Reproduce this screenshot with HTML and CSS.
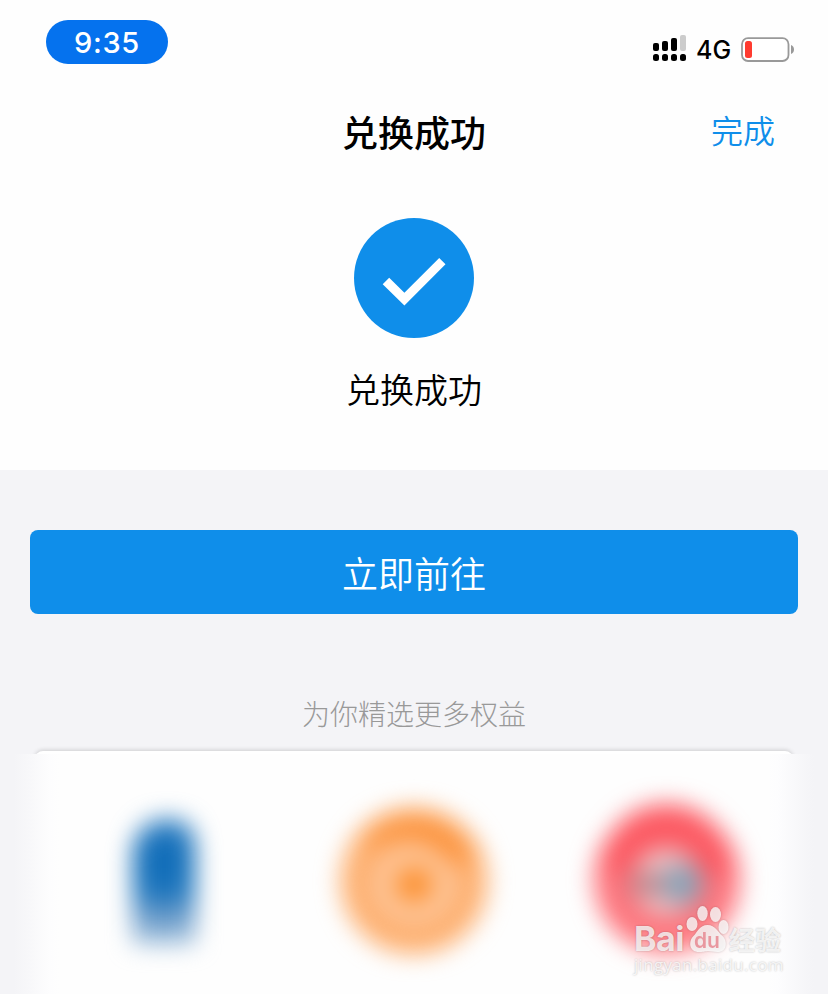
FILE: index.html
```html
<!DOCTYPE html>
<html lang="zh-CN">
<head>
    <meta charset="UTF-8">
    <meta name="viewport" content="width=device-width, initial-scale=1.0">
    <title>兑换成功</title>
    <link rel="stylesheet" href="styles.css">
</head>
<body>
    <div class="top">
        <div class="status-bar">
            <div class="time">9:35</div>
            <div class="status-right">
                <svg class="signal" width="34" height="28" viewBox="0 0 34 28">
                    <rect x="0" y="9" width="6" height="8" rx="2"/>
                    <rect x="9" y="7" width="6" height="10" rx="2"/>
                    <rect x="18" y="4" width="6" height="13" rx="2"/>
                    <rect class="signal-off" x="27" y="1" width="6" height="16" rx="2"/>
                    <rect x="0" y="20" width="6" height="7" rx="2.5"/>
                    <rect x="9" y="20" width="6" height="7" rx="2.5"/>
                    <rect x="18" y="20" width="6" height="7" rx="2.5"/>
                    <rect x="27" y="20" width="6" height="7" rx="2.5"/>
                </svg>
                <span class="network">4G</span>
                <svg class="battery" width="54" height="26" viewBox="0 0 54 26">
                    <rect x="1" y="1.2" width="46.5" height="22.800" rx="6" fill="#fff" stroke="#999" stroke-width="1.8"/>
                    <rect x="4" y="4" width="7" height="17" rx="2.5" fill="#ff3b30"/>
                    <path d="M50 8c4 1.500 4 7.500 0 9z" fill="#999"/>
                </svg>
            </div>
        </div>

        <div class="nav">
            <h1 class="nav-title">兑换成功</h1>
            <a class="nav-done">完成</a>
        </div>

        <div class="result">
            <svg class="result-icon" width="120" height="120" viewBox="0 0 120 120">
                <circle cx="60" cy="60" r="60" fill="#0f8eea"/>
                <polygon points="28.700,66.200 35.200,59.800 50.400,74.800 85.200,40 91.500,46.200 50.400,87.500" fill="#fff"/>
            </svg>
            <p class="result-text">兑换成功</p>
        </div>
    </div>

    <div class="main">
        <button class="btn-go">立即前往</button>
        <p class="more-title">为你精选更多权益</p>

        <div class="card">
            <div class="card-body">
                <svg class="brand" viewBox="0 0 252 242">
                    <defs>
                        <linearGradient id="blue" x1="0" y1="0" x2="0" y2="1">
                            <stop offset="0" stop-color="#2f7fc3"/>
                            <stop offset="0.3" stop-color="#0f6cb8"/>
                            <stop offset="0.58" stop-color="#1c75bd"/>
                            <stop offset="0.78" stop-color="#6d9cc9"/>
                            <stop offset="1" stop-color="#a5c3de"/>
                        </linearGradient>
                    </defs>
                    <path d="M97 190V95q4-22 24-29q38-6 38 27v97z" fill="url(#blue)"/>
                </svg>
                <svg class="brand" viewBox="0 0 252 242">
                    <circle cx="126" cy="127" r="73" fill="#fdae6d"/>
                    <path d="M66 91A69 69 0 0 1 190 104L158 112A48 48 0 0 0 96 88z" fill="#fc9540"/>
                    <ellipse cx="126" cy="131" rx="33" ry="30" fill="none" stroke="#fecba3" stroke-width="17"/>
                    <circle cx="101" cy="113" r="12" fill="#fec79c"/>
                    <circle cx="126" cy="130" r="17" fill="#fc9030"/>
                </svg>
                <svg class="brand" viewBox="0 0 252 242">
                    <circle cx="127" cy="126" r="73" fill="#fd747c"/>
                    <path d="M60 115A66 66 0 0 1 193 118L163 124A36 36 0 0 0 92 120z" fill="#fc5861"/>
                    <circle cx="126" cy="128" r="34" fill="#efc3c6"/>
                    <rect x="90" y="120" width="36" height="20" fill="#b58087"/>
                    <circle cx="143" cy="130" r="20" fill="#86a4b9"/>
                </svg>
            </div>
        </div>
    </div>

    <div class="watermark">
        <div class="watermark-logo">
            <span class="wm-bai">Bai</span>
            <svg class="wm-paw" width="44" height="50" viewBox="0 0 44 50">
                <ellipse cx="7" cy="20" rx="5.500" ry="7"/>
                <ellipse cx="17.500" cy="9.500" rx="5.200" ry="7.500"/>
                <ellipse cx="30.500" cy="10.500" rx="5.500" ry="7.500"/>
                <ellipse cx="38.500" cy="23" rx="5" ry="7"/>
                <path d="M22.500 21c-8 0-10 7-14 11c-5 5-5 16 6 16c5 0 5-1 9-1s5 1 9 1c10 0 10-11 5-16c-5-4-7-11-15-11z"/>
                <text x="22" y="44" text-anchor="middle">du</text>
            </svg>
            <span class="wm-cn">经验</span>
        </div>
        <div class="watermark-url">jingyan.baidu.com</div>
    </div>
</body>
</html>
```
FILE: styles.css
```css
* {
    box-sizing: border-box;
}

body {
    margin: 0;
    height: 994px;
    overflow: hidden;
    position: relative;
    background-color: #f4f4f7;
    color: #000;
    font-family: "Noto Sans CJK SC", sans-serif;
}

h1,
p {
    margin: 0;
}

.top {
    height: 470px;
    background-color: #fefefe;
}

/* status bar */
.status-bar {
    height: 84px;
    padding: 20px 35px 0 46px;
    display: flex;
    justify-content: space-between;
    align-items: flex-start;
}

.time {
    width: 122px;
    height: 44px;
    border-radius: 22px;
    background-color: #0572ee;
    color: #fff;
    font-family: Inter, sans-serif;
    font-size: 29px;
    font-weight: 550;
    line-height: 45px;
    letter-spacing: 0.7px;
    text-align: center;
}

.status-right {
    display: flex;
    align-items: center;
    height: 28px;
    margin-top: 14px;
}

.signal-off {
    fill: #ccc;
}

.network {
    width: 36px;
    margin: 4px 9px 0 9px;
    font-family: Inter, sans-serif;
    font-size: 25px;
    font-weight: 450;
    line-height: 28px;
}

.battery {
    margin: 3px -2px 0 0;
}

/* nav */
.nav {
    height: 96px;
    padding: 0 53px;
    display: grid;
    grid-template-columns: 1fr auto 1fr;
    align-items: start;
}

.nav-title {
    grid-column: 2;
    font-size: 36px;
    font-weight: 500;
    line-height: 94px;
}

.nav-done {
    justify-self: end;
    color: #0f8eea;
    font-size: 32px;
    font-weight: 350;
    line-height: 91px;
}

.result {
    padding-top: 38px;
    display: flex;
    flex-direction: column;
    align-items: center;
}

.result-text {
    margin-top: 26px;
    font-size: 34px;
    font-weight: 350;
    line-height: 50px;
}

/* content */
.main {
    padding: 60px 30px 0;
}

.btn-go {
    display: block;
    width: 100%;
    height: 84px;
    padding: 0;
    border: none;
    border-radius: 8px;
    background-color: #0f8eea;
    color: #fff;
    font-family: inherit;
    font-size: 36px;
    font-weight: 350;
}

.more-title {
    margin-top: 79px;
    color: #999;
    font-size: 28px;
    font-weight: 300;
    line-height: 40px;
    text-align: center;
}

.card {
    margin-top: 18px;
}

.card::before {
    content: "";
    display: block;
    height: 8px;
    margin: 0 5px -5px;
    border-radius: 8px 8px 0 0;
    background-color: #fff;
    box-shadow: 0 -1px 4px rgba(0, 0, 0, 0.16);
}

.card-body {
    position: relative;
    height: 240px;
    margin: 0 -30px;
    padding: 0 36px;
    display: grid;
    grid-template-columns: repeat(3, 252px);
    background: linear-gradient(to right, #f4f4f7 0, #f4f4f7 14px, #f8f8fa 31px, #fdfdfe 50px, #fefefe 60px, #fefefe 768px, #fdfdfe 778px, #f8f8fa 797px, #f4f4f7 814px);
}

.brand {
    width: 252px;
    height: 242px;
    filter: blur(12px);
}

/* watermark */
.watermark {
    position: absolute;
    left: 634px;
    top: 904px;
    width: 156px;
    color: rgba(255, 255, 255, 0.78);
    text-shadow: 0 0 2px rgba(0, 0, 0, 0.28);
}

.watermark-logo {
    display: flex;
    align-items: flex-end;
    height: 50px;
}

.wm-bai {
    width: 51px;
    font-family: Inter, sans-serif;
    font-size: 34px;
    font-weight: 700;
    line-height: 31px;
    letter-spacing: -0.5px;
}

.wm-paw {
    flex: none;
    fill: rgba(255, 255, 255, 0.78);
    filter: drop-shadow(0 0 1px rgba(0, 0, 0, 0.25));
}

.wm-paw text {
    fill: #e9979f;
    font-family: Inter, sans-serif;
    font-size: 21px;
    font-weight: 600;
    text-shadow: none;
}

.wm-cn {
    flex: none;
    font-size: 26px;
    font-weight: 700;
    line-height: 30px;
}

.watermark-url {
    margin-top: 2px;
    font-family: "Open Sans", sans-serif;
    font-size: 17px;
    line-height: 18px;
    letter-spacing: 0.3px;
}
```
